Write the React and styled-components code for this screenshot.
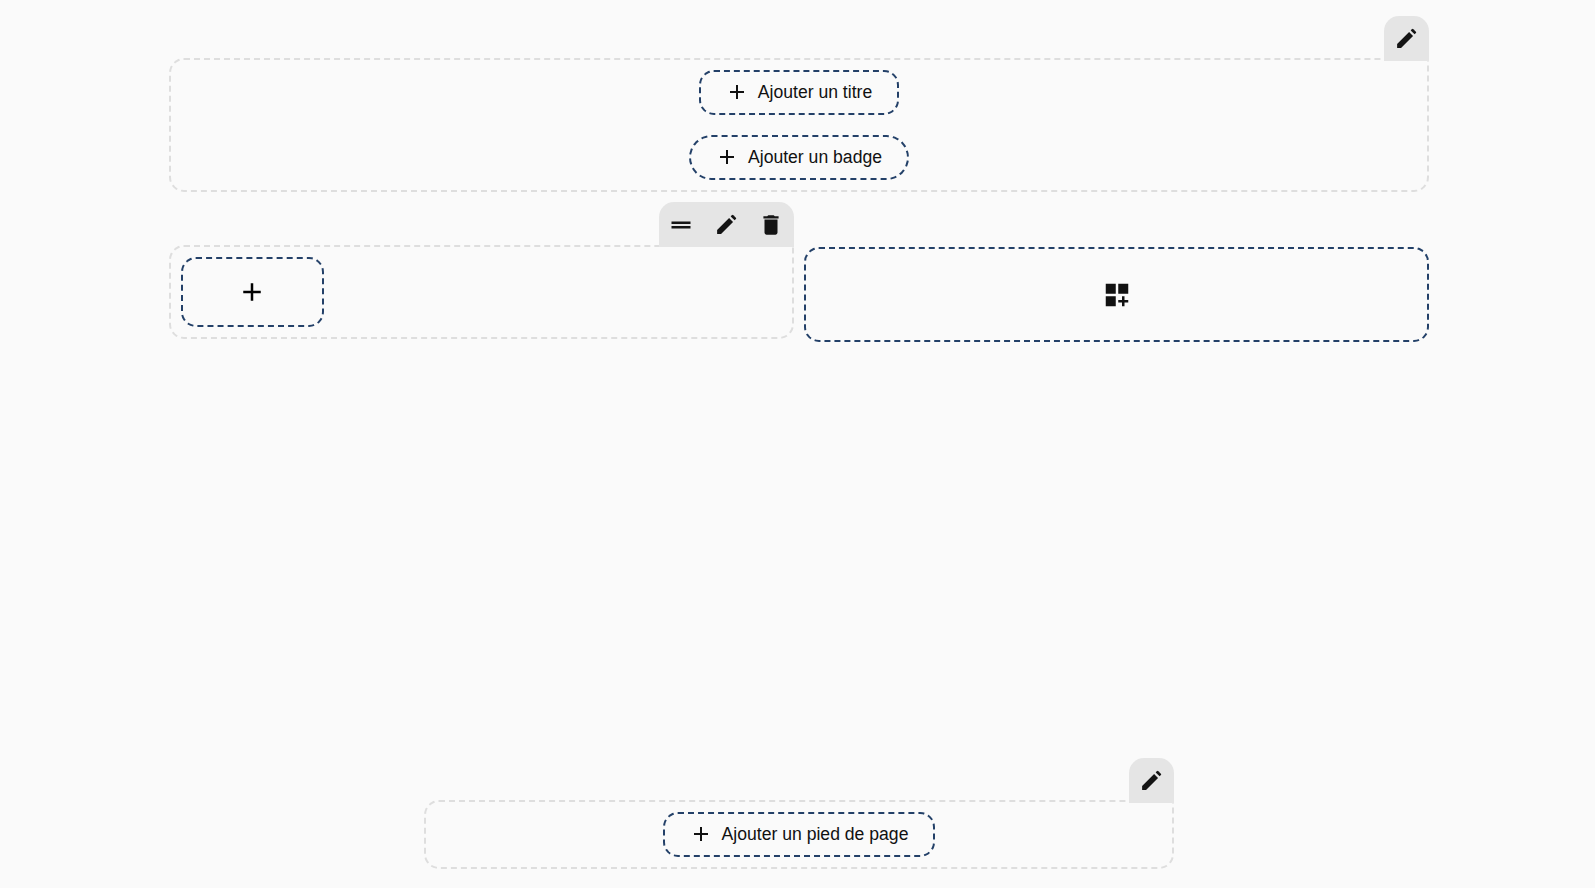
import React from "react";
import styled, { createGlobalStyle } from "styled-components";
import { MdAdd, MdDashboardCustomize, MdDelete } from "react-icons/md";

const GlobalStyle = createGlobalStyle`
  html, body {
    margin: 0;
    padding: 0;
    background: #fafafa;
    font-family: "Liberation Sans", Arial, sans-serif;
    color: #111;
  }
`;

const Page = styled.div`
  box-sizing: border-box;
  height: 888px;
  overflow: hidden;
  padding: 58px 166px 19px 169px;
  display: flex;
  flex-direction: column;
  justify-content: space-between;
  align-items: center;
`;

const Main = styled.div`
  width: 100%;
  display: flex;
  flex-direction: column;
  gap: 53px;
`;

const Zone = styled.section`
  position: relative;
  box-sizing: border-box;
  width: ${({ $width }) => $width || "100%"};
  border: 2px dashed #dedede;
  border-radius: 15px 0 15px 15px;
  padding: 10px;
  display: flex;
  flex-direction: column;
  align-items: ${({ $start }) => ($start ? "flex-start" : "center")};
  gap: 20px;
`;

const Tab = styled.div`
  position: absolute;
  top: ${({ $top }) => $top || "-44px"};
  right: -2px;
  height: 45px;
  background: #e5e5e5;
  border-radius: 15px 15px 0 0;
  display: flex;
  align-items: center;
`;

const TabIcon = styled.span`
  box-sizing: border-box;
  width: 45px;
  height: 45px;
  padding-right: 1px;
  display: flex;
  align-items: center;
  justify-content: center;
  font-size: 26px;
  color: #141414;
`;

const AddButton = styled.button`
  box-sizing: border-box;
  height: 45px;
  padding: 0 25px 0 24px;
  background: transparent;
  border: 2px dashed #234068;
  border-radius: ${({ $pill }) => ($pill ? "23px" : "15px")};
  display: flex;
  align-items: center;
  gap: 9px;
  font: 17.6px "Liberation Sans", Arial, sans-serif;
  color: #111;

  svg {
    margin-top: -2px;
  }
`;

const Columns = styled.div`
  display: grid;
  grid-template-columns: 625px 625px;
  gap: 10px;
  align-items: start;
`;

const SquareButton = styled.button`
  box-sizing: border-box;
  width: 143px;
  height: 70px;
  background: transparent;
  border: 2px dashed #234068;
  border-radius: 15px;
  display: flex;
  align-items: center;
  justify-content: center;
  font-size: 30px;
  color: #000;
  padding: 0 2px 0 0;
`;

const DropArea = styled.button`
  box-sizing: border-box;
  width: 625px;
  height: 95px;
  margin-top: 2px;
  background: transparent;
  border: 2px dashed #234068;
  border-radius: 15px;
  display: flex;
  align-items: center;
  justify-content: center;
  font-size: 30px;
  color: #111;
  padding: 0;
`;

const PenIcon = () => (
  <svg width="25" height="25" viewBox="0 0 24 24" fill="currentColor">
    <path d="M3 21v-3.8L14.5 5.7l3.8 3.8L6.8 21z" />
    <path d="M16 4.2l1.2-1.2a1 1 0 0 1 1.4 0l2.4 2.4a1 1 0 0 1 0 1.4L19.8 8z" />
  </svg>
);

const HandleIcon = () => (
  <svg width="26" height="26" viewBox="0 0 26 26" fill="currentColor">
    <rect x="3.5" y="9.5" width="19" height="2.5" />
    <rect x="3.5" y="14" width="19" height="2.5" />
  </svg>
);

const Add = ({ children, pill }) => (
  <AddButton $pill={pill}>
    <MdAdd size={24} />
    {children}
  </AddButton>
);

export default function App() {
  return (
    <>
      <GlobalStyle />
      <Page>
        <Main>
          <Zone>
            <Tab>
              <TabIcon><PenIcon /></TabIcon>
            </Tab>
            <Add>Ajouter un titre</Add>
            <Add pill>Ajouter un badge</Add>
          </Zone>
          <Columns>
            <Zone $start>
              <Tab $top="-45px">
                <TabIcon><HandleIcon /></TabIcon>
                <TabIcon><PenIcon /></TabIcon>
                <TabIcon><MdDelete /></TabIcon>
              </Tab>
              <SquareButton><MdAdd /></SquareButton>
            </Zone>
            <DropArea><MdDashboardCustomize /></DropArea>
          </Columns>
        </Main>
        <Zone $width="750px">
          <Tab>
            <TabIcon><PenIcon /></TabIcon>
          </Tab>
          <Add>Ajouter un pied de page</Add>
        </Zone>
      </Page>
    </>
  );
}
